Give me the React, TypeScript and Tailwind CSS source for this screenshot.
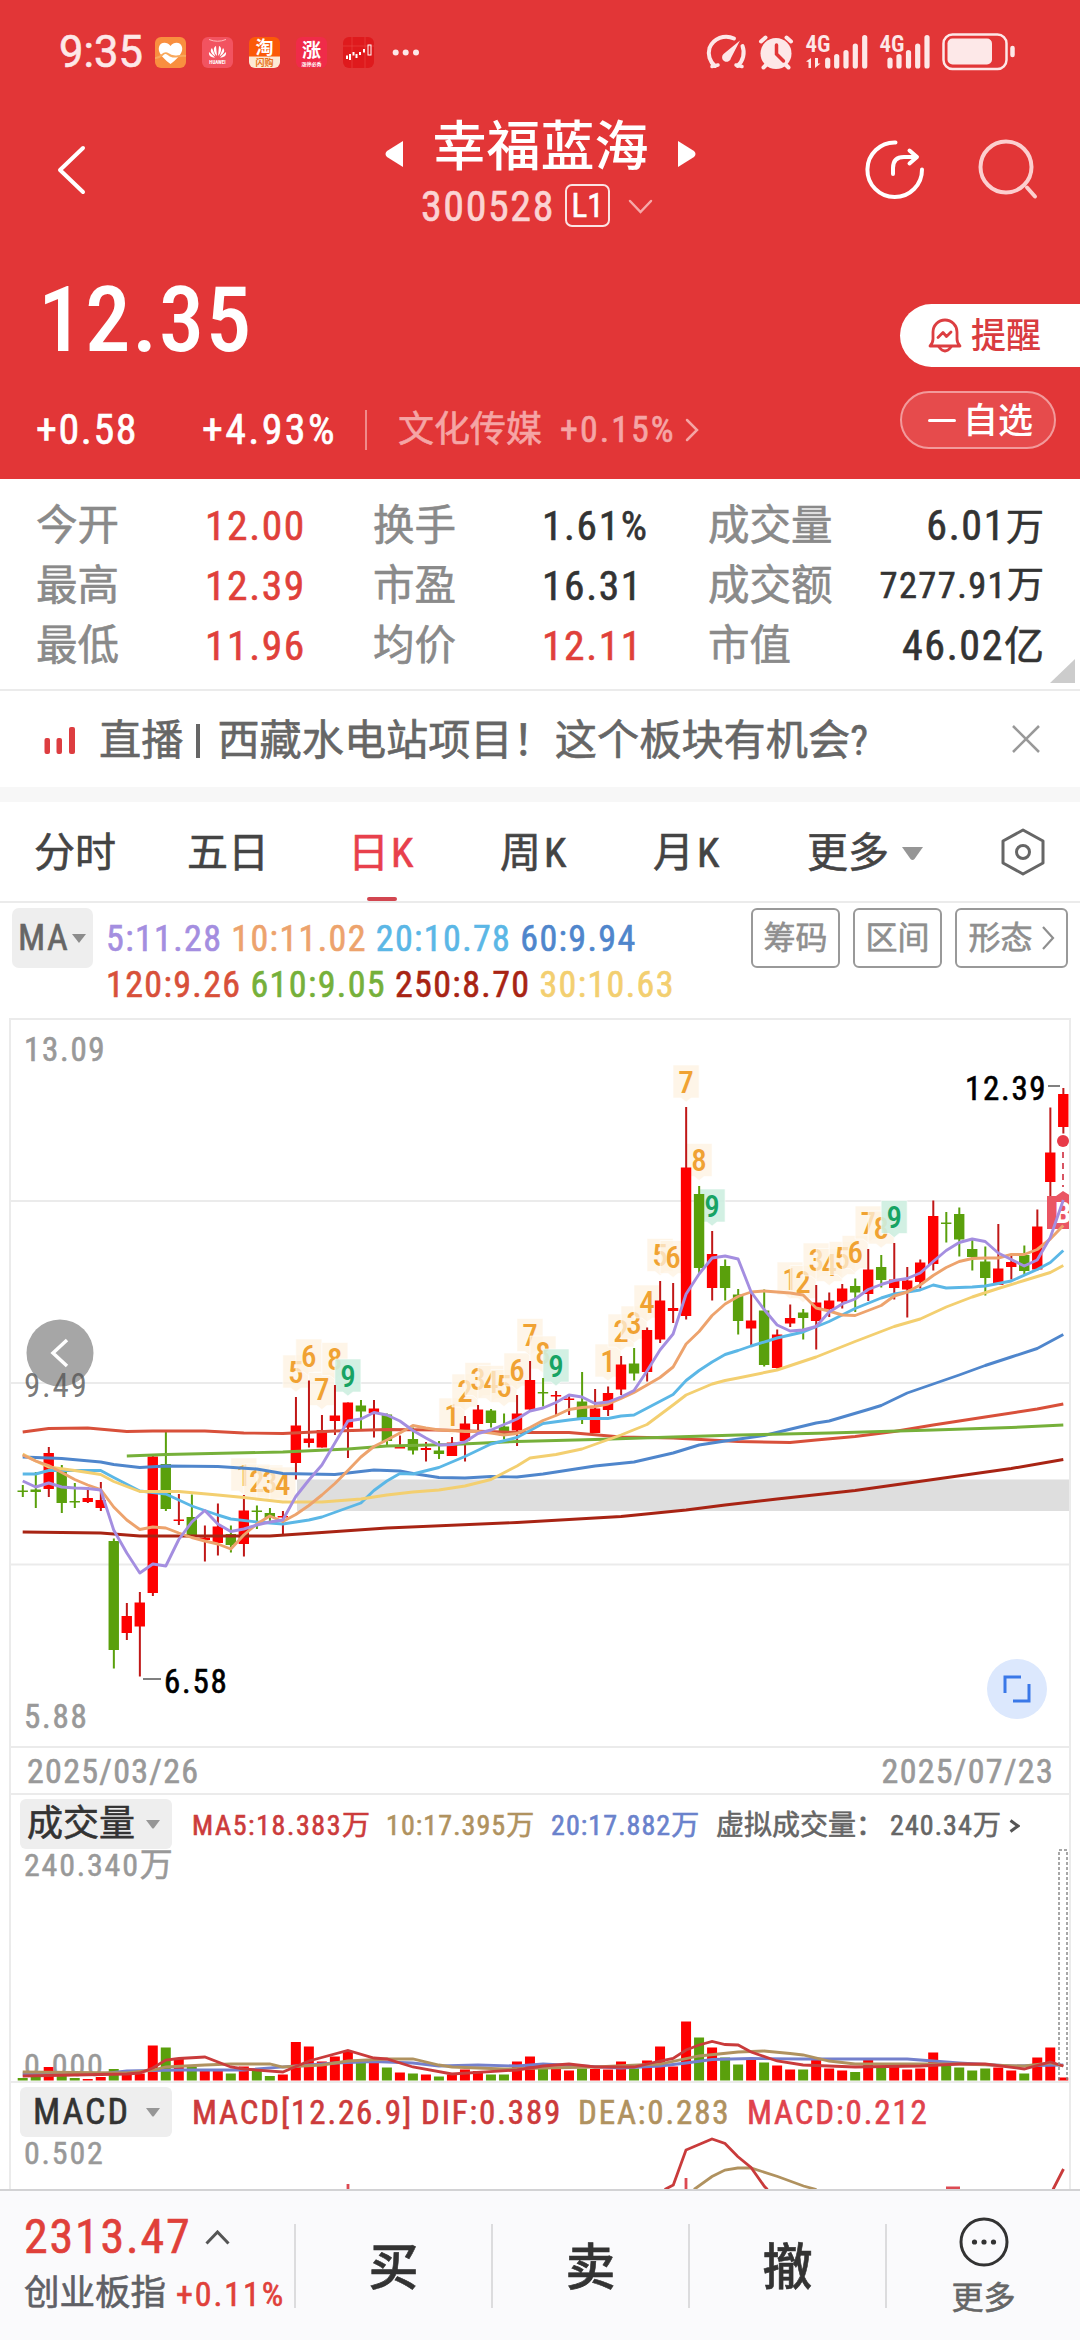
import React from "react";

type Candle = {
  up: 0 | 1;
  top: number;
  bottom: number;
  high: number;
  low: number;
  volume: number;
};

type Point = [number, number];

type Series = {
  color: string;
  points: Point[];
};

const RED = "#fe0000";
const GREEN = "#5aa00c";

// up, body top, body bottom, high, low, volume bar top
const rawCandles: [0 | 1, number, number, number, number, number][] = [
  [0, 1490.5, 1492, 1485, 1497, 2078],
  [0, 1489.5, 1492, 1472, 1508, 2076],
  [1, 1453, 1489, 1447, 1497, 2067],
  [0, 1472, 1503, 1465, 1513, 2076],
  [0, 1501, 1502.5, 1483, 1508, 2078],
  [1, 1498, 1502, 1487, 1503, 2079],
  [1, 1500, 1508, 1482, 1511, 2077],
  [0, 1541, 1650, 1538.5, 1668.5, 2069],
  [1, 1616, 1633, 1603, 1640, 2075],
  [1, 1602.5, 1626.5, 1592, 1676.5, 2073.5],
  [1, 1456.5, 1593, 1455.5, 1596, 2045.5],
  [0, 1464, 1509, 1430.5, 1511, 2047.5],
  [1, 1519.5, 1521, 1494, 1525, 2059],
  [0, 1517, 1535, 1494.5, 1536, 2067],
  [1, 1537.5, 1540, 1525.5, 1561.5, 2071],
  [1, 1526.5, 1543, 1503.5, 1555.5, 2071],
  [0, 1534, 1545, 1525.5, 1552.5, 2073.5],
  [1, 1510.5, 1544, 1495, 1556.5, 2066.5],
  [0, 1510.5, 1511.5, 1505.5, 1529, 2071],
  [0, 1513, 1518, 1508, 1524, 2076],
  [1, 1516, 1517.5, 1511, 1536, 2074.5],
  [1, 1425.5, 1463, 1397, 1479.5, 2042],
  [1, 1438.5, 1443, 1380.5, 1447.5, 2046.5],
  [1, 1430, 1447.5, 1415, 1447.5, 2061.5],
  [1, 1415.5, 1421, 1385, 1435, 2056.5],
  [1, 1402.5, 1427.5, 1402.5, 1458, 2051],
  [0, 1405.5, 1411.5, 1400, 1429.5, 2063],
  [1, 1408.5, 1413, 1400, 1437.5, 2063],
  [0, 1414.5, 1441, 1413.5, 1445, 2067.5],
  [1, 1447, 1448.5, 1435.5, 1447.5, 2072.5],
  [0, 1439, 1450.5, 1427.5, 1454.5, 2073.5],
  [1, 1448, 1450, 1442, 1461.5, 2074.5],
  [0, 1450.5, 1454, 1441, 1459, 2076.5],
  [1, 1442.5, 1456, 1437, 1456, 2074.5],
  [1, 1423.5, 1441, 1416, 1461.5, 2069.5],
  [1, 1409.5, 1424, 1405, 1431, 2071],
  [0, 1410.5, 1423, 1409, 1427.5, 2074.5],
  [0, 1426.5, 1435.5, 1413.5, 1439.5, 2074.5],
  [1, 1413.5, 1430.5, 1395, 1446, 2061.5],
  [1, 1380, 1409.5, 1361, 1410, 2056.5],
  [0, 1392, 1393.5, 1378, 1406.5, 2068.5],
  [1, 1395, 1396.5, 1391, 1415.5, 2069],
  [1, 1398.5, 1400, 1394, 1415, 2070.5],
  [0, 1401.5, 1418, 1372, 1424, 2068.5],
  [1, 1408.5, 1433, 1389, 1433, 2069],
  [1, 1393, 1410, 1386.5, 1416, 2069.5],
  [1, 1364.5, 1389.5, 1356, 1395, 2061.5],
  [0, 1363.5, 1373.5, 1348, 1380.5, 2068.5],
  [1, 1330, 1372, 1327.5, 1381.5, 2060.5],
  [1, 1300.5, 1339.5, 1281, 1343, 2046.5],
  [1, 1308, 1311, 1283, 1323, 2066.5],
  [1, 1167.5, 1316, 1107, 1319.5, 2021.5],
  [0, 1194, 1268, 1186, 1273.5, 2037.5],
  [1, 1254, 1288, 1231, 1300.5, 2047.5],
  [0, 1266, 1288, 1259.5, 1300.5, 2057.5],
  [0, 1294.5, 1321, 1289, 1334.5, 2064.5],
  [1, 1320.5, 1328.5, 1293, 1345.5, 2059.5],
  [0, 1310.5, 1365, 1289.5, 1366.5, 2062.5],
  [1, 1334.5, 1368, 1329.5, 1368.5, 2065.5],
  [1, 1318, 1323.5, 1304.5, 1327, 2069.5],
  [0, 1312.5, 1318, 1309, 1339.5, 2069.5],
  [1, 1302.5, 1321, 1285, 1349.5, 2060],
  [1, 1300.5, 1309, 1292.5, 1317, 2068.5],
  [1, 1288.5, 1301.5, 1284, 1308.5, 2070.5],
  [0, 1286, 1292.5, 1278.5, 1312, 2072],
  [1, 1269.5, 1294, 1249, 1301, 2060],
  [0, 1267, 1280, 1255, 1287.5, 2066.5],
  [1, 1279.5, 1288, 1243, 1299.5, 2066.5],
  [1, 1280.5, 1289.5, 1267, 1317.5, 2069.5],
  [1, 1262.5, 1282, 1259.5, 1288.5, 2068.5],
  [1, 1216, 1264, 1200.5, 1270.5, 2052.5],
  [0, 1222.5, 1224, 1212, 1242.5, 2066],
  [0, 1214, 1239.5, 1207.5, 1256.5, 2067.5],
  [0, 1249, 1257, 1239, 1270.5, 2070.5],
  [0, 1261.5, 1278, 1246.5, 1295.5, 2068.5],
  [1, 1268.5, 1285, 1224, 1285, 2067.5],
  [1, 1262, 1267, 1255.5, 1279.5, 2070.5],
  [0, 1255, 1271, 1245.5, 1275.5, 2073.5],
  [1, 1226.5, 1269.5, 1209.5, 1270.5, 2057.5],
  [1, 1152.5, 1182, 1107.5, 1199, 2047.5],
  [1, 1094, 1127, 1088, 1133.5, 2077.5],
];

const candles: Candle[] = rawCandles.map(([up, top, bottom, high, low, volume]) => ({
  up,
  top,
  bottom,
  high,
  low,
  volume,
}));

const ma5 = [
  1481, 1487, 1483, 1487, 1488, 1488.5, 1490, 1530, 1553, 1573, 1564, 1566, 1539.5, 1522, 1510.5,
  1524, 1531.5, 1529, 1525, 1522, 1520, 1496.5, 1480, 1465, 1443, 1421, 1419, 1412.5, 1415, 1421,
  1430.5, 1438, 1445, 1444.5, 1442, 1433.5, 1430, 1424.5, 1419, 1411, 1408, 1402.5, 1395, 1397,
  1403.5, 1402, 1397, 1390.5, 1371, 1350, 1334, 1294, 1274, 1258, 1256, 1259, 1292, 1309.5, 1325,
  1331, 1330, 1326.5, 1312, 1304, 1299, 1289.5, 1284.5, 1280.5, 1278.5, 1273, 1261.5, 1250.5,
  1242.5, 1239, 1241.5, 1253, 1259.5, 1266, 1260, 1237.5, 1200,
];

const ma10 = [
  1455, 1461, 1465.5, 1472.5, 1479.5, 1485, 1489.5, 1507, 1520, 1529.5, 1527, 1528, 1533, 1537.5,
  1541, 1544, 1549, 1535, 1524, 1516, 1521.5, 1514.5, 1505.5, 1495, 1483.5, 1470.5, 1457, 1446.5,
  1440, 1433, 1425.5, 1428, 1430, 1430.5, 1431.5, 1431.5, 1433, 1435, 1433.5, 1427.5, 1420.5,
  1415.5, 1409.5, 1407.5, 1406.5, 1404, 1398.5, 1392.5, 1385, 1377.5, 1367, 1344, 1331.5, 1315.5,
  1304, 1296.5, 1292, 1291, 1292, 1293, 1295, 1308, 1311, 1315, 1315.5, 1310.5, 1305.5, 1296, 1292,
  1285, 1275.5, 1267.5, 1261.5, 1258.5, 1258, 1258, 1254.5, 1254.5, 1249.5, 1239, 1225.5,
];

const priceSeries: Series[] = [
  {
    color: "#d8503a",
    points: [[0, 1432], [2, 1428.5], [5, 1428], [8, 1431.5], [10, 1431], [14, 1431], [17, 1433], [20, 1433.5], [24, 1431], [28, 1429.5], [32, 1430], [38, 1432.5], [42, 1432.5], [46, 1437], [50, 1438], [55, 1441.5], [59, 1442.5], [61, 1440], [64, 1436.5], [67, 1431.5], [70, 1425], [74, 1417], [78, 1409], [80, 1404]],
  },
  {
    color: "#a82414",
    points: [[0, 1532], [6, 1533], [9, 1536], [14, 1536], [19, 1536], [23, 1532.5], [28, 1528], [38, 1522.5], [46, 1516.5], [51, 1510], [54, 1505], [58, 1499], [64, 1490.5], [70, 1479.5], [76, 1468.5], [80, 1459.5]],
  },
  {
    color: "#4f86cc",
    points: [[0, 1457], [3, 1458.5], [6, 1462], [7, 1464.5], [9, 1467.5], [11, 1466], [15, 1466.5], [18, 1469], [20, 1473.5], [24, 1474.5], [27, 1470], [29, 1471], [30, 1473.5], [32, 1477.5], [34, 1478], [36, 1476.5], [38, 1477], [40, 1474], [44, 1466], [47, 1462], [50, 1453], [52, 1445], [54, 1441], [57, 1435.5], [61, 1423], [62, 1421], [65, 1409.5], [66, 1405.5], [68, 1393], [70, 1384], [72, 1375], [74, 1365.5], [76, 1357], [78, 1348.5], [80, 1334.5]],
  },
  {
    color: "#76b03a",
    points: [[8, 1456], [11, 1454.5], [20, 1452], [25, 1449], [28, 1446], [33, 1444.5], [38, 1441.5], [44, 1439.5], [50, 1437], [55, 1435], [62, 1433], [70, 1430], [76, 1427.5], [80, 1425]],
  },
  {
    color: "#5bb7e6",
    points: [[0, 1474], [1, 1474], [2, 1470.5], [6, 1470.5], [7, 1477.5], [9, 1491], [11, 1494], [13, 1506], [15, 1515], [16, 1519], [18, 1522], [20, 1524], [22, 1520], [23, 1517], [26, 1503], [27, 1490.5], [28, 1481], [29, 1473.5], [30, 1474], [32, 1467.5], [34, 1456.5], [36, 1444], [38, 1437.5], [40, 1423.5], [42, 1420], [43, 1418.5], [45, 1418.5], [46, 1416], [47, 1415], [50, 1394.5], [51, 1380.5], [52, 1370.5], [53, 1362], [54, 1354.5], [55, 1350.5], [56, 1346], [58, 1338], [60, 1332], [62, 1321.5], [64, 1308.5], [66, 1298], [67, 1294], [69, 1290], [70, 1285], [71, 1288], [73, 1287], [74, 1286], [76, 1281], [78, 1269.5], [79, 1262.5], [80, 1250.5]],
  },
  {
    color: "#f3cf70",
    points: [[0, 1454], [1, 1461], [2, 1467], [4, 1470.5], [6, 1474.5], [7, 1481.5], [9, 1491.5], [12, 1491.5], [15, 1495], [17, 1497.5], [20, 1502], [23, 1502], [26, 1499], [28, 1495], [30, 1492], [32, 1490], [34, 1486], [36, 1479.5], [38, 1466], [39, 1458], [41, 1454.5], [43, 1449], [46, 1435], [48, 1424.5], [50, 1405], [51, 1395], [53, 1384], [54, 1380.5], [55, 1378], [58, 1370], [61, 1357], [64, 1341.5], [67, 1326.5], [69, 1319], [71, 1307], [73, 1297], [75, 1288.5], [77, 1280.5], [79, 1272.5], [80, 1265.5]],
  },
  { color: "#eda36d", points: ma10.map((y, i): Point => [i, y]) },
  { color: "#a48ee0", points: ma5.map((y, i): Point => [i, y]) },
];

const volumeSeries: Series[] = [
  {
    color: "#7480cc",
    points: [[0, 2074], [6, 2074], [8, 2071], [12, 2070], [17, 2070], [24, 2063], [27, 2061.5], [30, 2063], [32, 2066], [35, 2065], [38, 2066], [40, 2064], [46, 2068], [49, 2066], [51, 2063], [53, 2059.5], [56, 2058.5], [60, 2059], [68, 2059], [72, 2063], [76, 2066], [80, 2065]],
  },
  {
    color: "#b0925f",
    points: [[0, 2072], [8, 2073], [10, 2070], [11, 2067], [14, 2065], [16, 2064], [19, 2064], [20, 2067], [23, 2065], [25, 2061], [28, 2059], [30, 2059], [32, 2065], [33, 2067], [37, 2069], [40, 2068], [44, 2067], [49, 2064], [52, 2056], [55, 2052], [57, 2051], [59, 2053.5], [60, 2055], [62, 2061], [64, 2064], [72, 2064], [77, 2066], [79, 2063], [80, 2066]],
  },
  {
    color: "#c93b3b",
    points: [[0, 2076], [8, 2074], [9, 2073], [10, 2068], [11, 2060], [12, 2058.5], [14, 2057], [16, 2067], [17, 2069], [20, 2072], [22, 2061], [25, 2050.5], [27, 2058], [28, 2059], [30, 2067], [33, 2074], [38, 2070], [40, 2066], [42, 2064], [44, 2067], [47, 2067], [49, 2061], [50, 2058.5], [51, 2050], [52, 2045], [53, 2041.5], [54, 2044.5], [55, 2045], [56, 2052], [58, 2061], [60, 2065], [64, 2067], [69, 2066], [72, 2064], [74, 2064], [77, 2069], [79, 2062], [80, 2066]],
  },
];

// candle index, count, top of the tag
const tags: [number, number, number][] = [
  [17, 1, 1458], [18, 2, 1464], [19, 3, 1465], [20, 4, 1467],
  [21, 5, 1355], [22, 6, 1339], [23, 7, 1372.5], [24, 8, 1342.5], [25, 9, 1359],
  [33, 1, 1398], [34, 2, 1374], [35, 3, 1362.5], [36, 4, 1365.5], [37, 5, 1369.5], [38, 6, 1353], [39, 7, 1318.5], [40, 8, 1336], [41, 9, 1349],
  [45, 1, 1344], [46, 2, 1314], [47, 3, 1306], [48, 4, 1285], [49, 5, 1238.5], [50, 6, 1240.5], [51, 7, 1065], [52, 8, 1143.5], [53, 9, 1189],
  [59, 1, 1262], [60, 2, 1265.5], [61, 3, 1243], [62, 4, 1248.5], [63, 5, 1241.5], [64, 6, 1235.5], [65, 7, 1206], [66, 8, 1211], [67, 9, 1200.5],
];

const xAt = (i: number) => 22.7 + i * 13.007;

const toPoints = (points: Point[]) => points.map(([i, y]) => `${xAt(i).toFixed(1)},${y}`).join(" ");

const Num: React.FC<{ className?: string; children: React.ReactNode }> = ({ className = "", children }) => (
  <span className={`tracking-[0.038em] ${className}`}>{children}</span>
);

const WideNum: React.FC<{ className?: string; children: React.ReactNode }> = ({ className = "", children }) => (
  <span className={`tracking-[0.056em] ${className}`}>{children}</span>
);

const StatusIcons: React.FC = () => (
  <svg className="h-[46px] w-[320px]" viewBox="700 30 320 46" fill="none" stroke="#fde8e8" strokeLinecap="round">
    <path d="M715 66 A17 17 0 0 1 709.500 48 A18 18 0 0 1 734 38.500" strokeWidth="4" />
    <path d="M742.500 46 A18 18 0 0 1 737.500 66" strokeWidth="4" />
    <path d="M712 66.500 L718 65 M742 66.500 L736 65" strokeWidth="3.500" />
    <path d="M740 40.500 L731 58 A4.500 4.500 0 1 1 723.500 54 Z" fill="#fde8e8" stroke="none" />
    <circle cx="776" cy="53.500" r="15.500" fill="#fde8e8" stroke="none" />
    <path d="M761 41.500 L765.500 37.500 M791 41.500 L786.500 37.500 M767 64 L763.500 67.500 M785 64 L788.500 67.500" strokeWidth="4" />
    <path d="M776.500 45 V54 L783.500 61" stroke="#e23637" strokeWidth="3.500" />
    <text x="805.500" y="51.500" fontSize="23" fontWeight="600" fill="#fde8e8" stroke="none">4G</text>
    <path d="M806 61.500 L811 58 V68 H808.500 V62 Z M815 58 V68 L820.500 63.500 H818 V58 Z" fill="#fde8e8" stroke="none" />
    <path d="M827.700 60 V66 M836.700 56.500 V66 M846 52.500 V66 M855.300 46 V66 M864.700 37.500 V66" strokeWidth="5.200" />
    <text x="879.500" y="51.500" fontSize="23" fontWeight="600" fill="#fde8e8" stroke="none">4G</text>
    <path d="M890 60 V66 M899 56.500 V66 M908.500 52.500 V66 M917.700 46 V66 M927 37.500 V66" strokeWidth="5.200" />
    <rect x="943.500" y="34.500" width="63" height="34.500" rx="9" strokeWidth="2.500" />
    <rect x="947.500" y="38.500" width="44.500" height="26" rx="5" fill="#fde8e8" stroke="none" />
    <path d="M1012.500 48 V55" strokeWidth="4.500" />
  </svg>
);

const AppIcons: React.FC = () => (
  <svg className="h-[32px] w-[270px]" viewBox="155 37 270 32">
    <defs>
      <linearGradient id="tao" x1="0" y1="0" x2="0" y2="1">
        <stop offset="0.600" stopColor="#fb5a08" />
        <stop offset="0.660" stopColor="#fde9d4" />
      </linearGradient>
    </defs>
    <rect x="155" y="37" width="31" height="31" rx="6" fill="#f98f3f" />
    <path d="M170.500 64 C160 56 158 51 159 47 C160 42 167 41 170.500 46 C174 41 181 42 182 47 C183 51 181 56 170.500 64 Z" fill="#fff" />
    <path d="M155 58 C162 59 163 50 168 54 C173 59 178 55 186 56" fill="none" stroke="#f9a95c" strokeWidth="2" />
    <rect x="202" y="37" width="31" height="31" rx="6" fill="#f25360" />
    <path d="M209 39.500 Q217.500 43 226 39.500" fill="none" stroke="#fbb" strokeWidth="1" />
    <path
      d="M217 56 C213 52 213 47 216 46 Z M218 56 C222 52 222 47 219 46 Z M215.500 56.500 C210 53 210 50 212 48 Z M219.500 56.500 C225 53 225 50 223 48 Z M215 57.500 C210 57.500 208.500 55 209 52 Z M220 57.500 C225 57.500 226.500 55 226 52 Z"
      fill="#fff"
    />
    <text x="217.500" y="63.500" fontSize="5" fontWeight="700" fill="#fff" textAnchor="middle">HUAWEI</text>
    <rect x="249" y="37" width="31" height="31" rx="6" fill="url(#tao)" />
    <text x="264.500" y="54" fontSize="18" fontWeight="700" fill="#fff" textAnchor="middle">淘</text>
    <text x="264.500" y="66" fontSize="9" fontWeight="700" fill="#e8741c" textAnchor="middle">闪购</text>
    <rect x="296" y="37" width="31" height="31" rx="6" fill="#f02b49" />
    <text x="311.500" y="57" fontSize="19" fontWeight="700" fill="#fff" textAnchor="middle">涨</text>
    <text x="311.500" y="65.500" fontSize="5" fontWeight="700" fill="#fff" textAnchor="middle">涨停必秀</text>
    <rect x="343" y="37" width="31" height="31" rx="6" fill="#df1a1d" />
    <path d="M343 46 H374 M352 37 V68 M365 37 V68" stroke="#e8443f" strokeWidth="0.700" />
    <path
      d="M347 55.500 V59 M350 54 V60 M353.500 52 V55.500 M356.500 54 V58 M360 52 V55 M364 49 V52.500"
      stroke="#fff"
      strokeWidth="2"
    />
    <rect x="368" y="45" width="3" height="10" fill="none" stroke="#fff" strokeWidth="1" />
    <circle cx="395.700" cy="52.500" r="3" fill="#fde8e8" />
    <circle cx="405.700" cy="52.500" r="3" fill="#fde8e8" />
    <circle cx="416" cy="52.500" r="3" fill="#fde8e8" />
  </svg>
);

const Header: React.FC = () => (
  <header className="flex h-[479px] flex-col bg-[#e23637] text-white">
    <div className="flex h-[106px] items-center pl-[59px]">
      <div className="w-[96px] text-[43.500px] leading-none font-stretch-normal text-[#fde8e8]">9:35</div>
      <AppIcons />
      <div className="ml-[275px]">
        <StatusIcons />
      </div>
    </div>

    <div className="grid h-[128px] grid-cols-[385px_311px_384px]">
      <div className="flex items-center pl-[56px]">
        <svg className="h-[50px] w-[30px]" viewBox="0 0 30 50" fill="none" stroke="#fff" strokeWidth="4" strokeLinecap="round" strokeLinejoin="round">
          <path d="M27 3 L4 25 L27 47" />
        </svg>
      </div>
      <div className="flex flex-col pt-[12px]">
        <div className="flex h-[60px] items-center justify-between">
          <svg className="mt-[11px] h-[26px] w-[18px]" viewBox="0 0 18 26" fill="#fff">
            <path d="M18 0 V26 L2 16 Q-1 13 2 10 Z" />
          </svg>
          <h1 className="text-[54px] leading-[60px] font-medium [-webkit-text-stroke:0px]">幸福蓝海</h1>
          <svg className="mt-[11px] h-[26px] w-[18px]" viewBox="0 0 18 26" fill="#fff">
            <path d="M0 0 V26 L16 16 Q19 13 16 10 Z" />
          </svg>
        </div>
        <div className="flex h-[56px] items-center pt-[2px] pl-[36px]">
          <Num className="w-[144px] text-[42px] leading-none text-[#fbd3d3]">300528</Num>
          <div className="flex h-[43px] w-[45px] -translate-y-[2px] items-center justify-center rounded-[7px] border-2 border-[#fbe4e4] text-[33px] leading-none">
            L1
          </div>
          <svg className="ml-[18px] h-[16px] w-[25px]" viewBox="0 0 25 16" fill="none" stroke="#f6a9a9" strokeWidth="2.500" strokeLinecap="round">
            <path d="M2 2 L12.500 13 L23 2" />
          </svg>
        </div>
      </div>
      <div className="flex items-center gap-[51px] pl-[168px]">
        <svg className="h-[64px] w-[62px]" viewBox="863 138 62 64" fill="none" stroke="#fff" strokeWidth="4" strokeLinecap="round" strokeLinejoin="round">
          <path d="M894.500 142.500 A27.300 27.300 0 1 0 921 169.500" />
          <path d="M892 174 V168 Q892 157 903 157 H915 M908.500 150.500 L916 157 L908.500 163.500" />
        </svg>
        <svg className="h-[64px] w-[62px]" viewBox="976 138 62 64" fill="none" stroke="#fccfcf" strokeWidth="4" strokeLinecap="round">
          <circle cx="1005" cy="167" r="25.500" />
          <path d="M1026 187.500 L1034 196.500" />
        </svg>
      </div>
    </div>

    <div className="flex flex-1 justify-between">
      <div className="pt-[53px] pl-[36px]">
        <div className="pl-[2px] text-[91px] leading-[66px] font-medium tracking-[1.500px] [-webkit-text-stroke:0px]">12.35</div>
        <div className="mt-[56px] flex h-[42px] items-center text-[42px] leading-none">
          <Num className="w-[166px]">+0.58</Num>
          <WideNum className="w-[163px]">+4.93%</WideNum>
          <div className="h-[40px] w-[2px] bg-[#f08a8a]" />
          <div className="ml-[31px] w-[162px] text-[36px] text-[#f5a5a5]">文化传媒</div>
          <WideNum className="w-[124px] text-[36px] text-[#f5a5a5]">+0.15%</WideNum>
          <svg className="h-[24px] w-[16px]" viewBox="0 0 16 24" fill="none" stroke="#f5a5a5" strokeWidth="2.500" strokeLinecap="round">
            <path d="M3 2 L13 12 L3 22" />
          </svg>
        </div>
      </div>
      <div className="flex w-[180px] flex-col gap-[24px] pt-[70px]">
        <button className="flex h-[63px] w-full items-center rounded-l-full bg-white pl-[28px] text-[#d93c3f]">
          <svg className="mr-[9px] h-[36px] w-[34px]" viewBox="0 0 34 36" fill="none" stroke="#dc3e41" strokeWidth="2.800" strokeLinecap="round" strokeLinejoin="round">
            <path d="M5 21 V14 A12 12 0 0 1 29 14 V21 Q29 25 32 28 H2 Q5 25 5 21 Z" />
            <path d="M10 19.500 L15 14.500 L18.500 18.500 L23 14" />
            <path d="M11 29 Q17 37 23 29" />
          </svg>
          <span className="translate-y-px text-[35px] leading-none font-medium [-webkit-text-stroke:0px]">提醒</span>
        </button>
        <button className="flex h-[58px] w-[156px] items-center rounded-full border-2 border-[#f29a9b] bg-[#e64b4c] pl-[26px] text-white">
          <span className="mr-[7px] h-[3px] w-[28px] rounded-full bg-white" />
          <span className="translate-y-px text-[35px] leading-none font-medium [-webkit-text-stroke:0px]">自选</span>
        </button>
      </div>
    </div>
  </header>
);

type StatRow = {
  name: string;
  value: string;
  color: string;
}[];

const statRows: StatRow[] = [
  [
    { name: "今开", value: "12.00", color: "text-[#e0403a]" },
    { name: "换手", value: "1.61%", color: "text-[#333333]" },
  ],
  [
    { name: "最高", value: "12.39", color: "text-[#e0403a]" },
    { name: "市盈", value: "16.31", color: "text-[#333333]" },
  ],
  [
    { name: "最低", value: "11.96", color: "text-[#e0403a]" },
    { name: "均价", value: "12.11", color: "text-[#e0403a]" },
  ],
];

const totals = [
  { name: "成交量", value: "6.01", unit: "万", size: "text-[42px]", unitSize: "text-[38px]" },
  { name: "成交额", value: "7277.91", unit: "万", size: "text-[36.500px]", unitSize: "text-[37px]" },
  { name: "市值", value: "46.02", unit: "亿", size: "text-[42px]", unitSize: "text-[40px]" },
];

const Stats: React.FC = () => (
  <section className="relative h-[212px] border-b-2 border-[#ebebeb] pt-[17px] pr-[36px] pl-[36px]">
    {statRows.map((row, i) => (
      <div key={totals[i].name} className="grid h-[60px] grid-cols-[169px_168px_169px_166px_auto_1fr] items-center text-[41.500px] leading-none">
        {row.map((stat) => (
          <React.Fragment key={stat.name}>
            <span className="text-[#8a8a8a]">{stat.name}</span>
            <Num className={stat.color}>{stat.value}</Num>
          </React.Fragment>
        ))}
        <span className="text-[#8a8a8a]">{totals[i].name}</span>
        <span className={`text-right text-[#333333] ${totals[i].size}`}>
          <Num>{totals[i].value}</Num>
          <span className={totals[i].unitSize}>{totals[i].unit}</span>
        </span>
      </div>
    ))}
    <svg className="absolute right-[5px] bottom-[6px] h-[24px] w-[25px]" viewBox="0 0 25 24" fill="#cccccc">
      <path d="M25 0 V24 H0 Z" />
    </svg>
  </section>
);

const LiveBanner: React.FC = () => (
  <section className="flex h-[96px] items-center pr-[40px] pl-[44px]">
    <svg className="mt-[2px] h-[27px] w-[32px]" viewBox="0 0 32 27" fill="#dd3d40">
      <rect x="0.500" y="11" width="5.500" height="16" rx="2" />
      <rect x="12.500" y="11" width="5.500" height="16" rx="2" />
      <rect x="25" y="0" width="6" height="27" rx="2" />
    </svg>
    <div className="ml-[23px] flex translate-y-[2px] items-center text-[42.200px] leading-none text-[#666666]">
      直播
      <span className="mr-[17px] ml-[13px] h-[34px] w-[4px] bg-[#666666]" />
      西藏水电站项目！这个板块有机会?
    </div>
    <svg className="ml-auto h-[28px] w-[28px]" viewBox="0 0 28 28" stroke="#999999" strokeWidth="2.500">
      <path d="M1 1 L27 27 M27 1 L1 27" />
    </svg>
  </section>
);

const Tabs: React.FC = () => (
  <nav className="grid h-[101px] grid-cols-[153px_161px_152px_153px_154px_194px_auto] items-center border-b-2 border-[#ebebeb] pt-[3px] pl-[34px] text-[41px] leading-none text-[#444444]">
    <span>分时</span>
    <span>五日</span>
    <span className="relative flex h-full items-center text-[#e8404c]">
      日<span className="ml-[2px]">K</span>
      <span className="absolute bottom-0 left-[19px] h-[4px] w-[30px] rounded-full bg-[#d24650]" />
    </span>
    <span>周<span className="ml-[3px]">K</span></span>
    <span>月<span className="ml-[3px]">K</span></span>
    <span className="flex items-center">
      更多
      <svg className="ml-[13px] h-[13px] w-[21px]" viewBox="0 0 21 13" fill="#969696">
        <path d="M0 0 H21 L12.500 12 Q10.500 14 8.500 12 Z" />
      </svg>
    </span>
    <svg className="mb-[2px] h-[48px] w-[44px]" viewBox="0 0 44 48" fill="none" stroke="#666666" strokeWidth="3">
      <path d="M22 2 L42 13 V35 L22 46 L2 35 V13 Z" strokeLinejoin="round" />
      <circle cx="22" cy="24" r="6.500" />
    </svg>
  </nav>
);

const maRows = [
  [
    { text: "5:11.28", color: "text-[#a48ee0]" },
    { text: "10:11.02", color: "text-[#eda36d]" },
    { text: "20:10.78", color: "text-[#5bb7e6]" },
    { text: "60:9.94", color: "text-[#4f86cc]" },
  ],
  [
    { text: "120:9.26", color: "text-[#d8503a]" },
    { text: "610:9.05", color: "text-[#76b03a]" },
    { text: "250:8.70", color: "text-[#a82414]" },
    { text: "30:10.63", color: "text-[#f3cf70]" },
  ],
];

const chartButton = "flex h-[60px] items-center justify-center rounded-[6px] border-2 border-[#999999]";

const MaLegend: React.FC = () => (
  <section className="flex h-[115px] items-start pt-[5px] pr-[12px] pl-[12px]">
    <div className="flex h-[60px] w-[81px] items-center rounded-[7px] bg-[#eeeeee] pl-[6px] text-[36px] leading-none text-[#666666]">
      <Num>MA</Num>
      <svg className="ml-auto mr-[7px] h-[9px] w-[14px]" viewBox="0 0 14 9" fill="#8c8c8c">
        <path d="M0 0 H14 L7 9 Z" />
      </svg>
    </div>
    <div className="ml-[13px] flex-1 text-[36px] leading-[46px]">
      {maRows.map((row) => (
        <div key={row[0].text} className="flex translate-y-[8px] gap-[9px]">
          {row.map((item) => (
            <Num key={item.text} className={item.color}>{item.text}</Num>
          ))}
        </div>
      ))}
    </div>
    <div className="flex gap-[13px] text-[32px] leading-none text-[#8f8f8f]">
      <button className={`${chartButton} w-[89px]`}>筹码</button>
      <button className={`${chartButton} w-[89px]`}>区间</button>
      <button className={`${chartButton} w-[113px]`}>
        形态
        <svg className="ml-[8px] h-[24px] w-[14px]" viewBox="0 0 14 24" fill="none" stroke="#8f8f8f" strokeWidth="2.200">
          <path d="M2 1 L12 12 L2 23" />
        </svg>
      </button>
    </div>
  </section>
);

const PriceChart: React.FC = () => (
  <svg className="-mx-[11px] block h-[728px] w-[1080px] max-w-none" viewBox="0 1018 1080 728">
    <path d="M9 1019 H1071 M9 1201 H1071 M9 1383 H1071 M9 1564.500 H1071" stroke="#ebebeb" strokeWidth="2" />
    <rect x="297" y="1479.500" width="774" height="31.500" fill="#dedede" />

    <g fontSize="33" fill="#999999" stroke="#999999" strokeWidth="0.600" letterSpacing="1.700">
      <text x="24" y="1060.500">13.09</text>
      <text x="24" y="1728">5.88</text>
    </g>
    <circle cx="60" cy="1353" r="33.500" fill="#a6a6a6" />
    <path d="M67 1340 L53 1353 L67 1366" fill="none" stroke="#fff" strokeWidth="3.500" />
    <text x="24" y="1397" fontSize="33" fill="#555555" fillOpacity="0.800" letterSpacing="1.700">9.49</text>

    {tags.map(([i, count, top]) => {
      const x = xAt(i);
      const last = count === 9;
      return (
        <g key={i}>
          <path
            d={`M${x - 13} ${top} H${x + 13} V${top + 33} H${x + 5} L${x} ${top + 37} L${x - 5} ${top + 33} H${x - 13} Z`}
            fill={last ? "#cdeee0" : "#fef1e0"}
            fillOpacity={last ? 0.9 : 0.75}
            stroke="#fff"
            strokeOpacity="0.600"
          />
          <text x={x} y={top + 27.5} fontSize="31" fontWeight="500" textAnchor="middle" fill={last ? "#17a364" : "#f0a233"}>
            {count}
          </text>
        </g>
      );
    })}

    {candles.map((c, i) => (
      <g key={i} fill={c.up ? RED : GREEN}>
        <rect x={xAt(i) - 0.9} y={c.high} width="2" height={c.low - c.high} fill={c.up ? "#c01818" : GREEN} />
        <rect x={xAt(i) - 5.2} y={c.top} width="10.400" height={Math.max(c.bottom - c.top, 1.5)} />
      </g>
    ))}

    <circle cx="1063" cy="1141" r="6" fill="#e83a48" />
    <path d="M1063 1152 V1187" stroke="#d85563" strokeWidth="2" strokeDasharray="6 5" />
    <path d="M1047 1196 H1056 L1063 1191 L1071 1196 V1229 H1047 Z" fill="#ea5563" />
    <text x="1055" y="1223" fontSize="29" fontWeight="700" fill="#fff">B</text>

    {priceSeries.map((s) => (
      <polyline key={s.color} points={toPoints(s.points)} fill="none" stroke={s.color} strokeWidth="2.900" strokeLinejoin="round" />
    ))}

    <path d="M143 1679 H161 M1048 1086 H1060" stroke="#808080" strokeWidth="1.800" />
    <g fontSize="33" letterSpacing="1.700" fill="#000" stroke="#000" strokeWidth="0.600">
      <text x="164" y="1693">6.58</text>
      <text x="965" y="1100">12.39</text>
    </g>

    <circle cx="1017" cy="1689" r="30" fill="#dce8fd" />
    <path d="M1005 1693 V1677 H1021 M1029 1684 V1701 H1013" fill="none" stroke="#3a78e8" strokeWidth="3" />
  </svg>
);

const VolumeChart: React.FC = () => (
  <svg className="-mx-[11px] block h-[230px] w-[1080px] max-w-none overflow-visible" viewBox="0 1853 1080 230">
    <path d="M9 2082 H1071" stroke="#ebebeb" strokeWidth="2" />
    {candles.map((c, i) => (
      <rect key={i} x={xAt(i) - 5} y={c.volume} width="10" height={2080.5 - c.volume} fill={c.up ? RED : GREEN} />
    ))}
    <g fontSize="32" fill="#999999" stroke="#999999" strokeWidth="0.500" letterSpacing="1.800">
      <text x="24" y="1876">
        240.340<tspan fontSize="33" letterSpacing="0">万</tspan>
      </text>
      <text x="24" y="2076">0.000</text>
    </g>
    {volumeSeries.map((s) => (
      <polyline key={s.color} points={toPoints(s.points)} fill="none" stroke={s.color} strokeWidth="2.800" />
    ))}
    <path d="M1059 2080 V1850 H1067 V2080" fill="none" stroke="#8a8a8a" strokeWidth="1.500" strokeDasharray="3 2" />
  </svg>
);

const MacdChart: React.FC = () => (
  <svg className="-mx-[11px] block h-[51px] w-[1080px] max-w-none overflow-visible" viewBox="0 2138 1080 51">
    <text x="24" y="2163.500" fontSize="32" letterSpacing="1.800" fill="#999999" stroke="#999999" strokeWidth="0.500">0.502</text>
    <g fill="none" strokeWidth="2.800">
      <path d="M686 2178 V2189 M348 2184 V2189 M946 2188 H960" stroke="#dc4a52" />
      <path d="M694 2189.500 L712 2176.500 L725 2170 L737.700 2168 H751 L777.600 2176.500 L803.500 2186 L816.500 2189.500" stroke="#b0925f" />
      <path d="M664.700 2189.500 L673.300 2185 L686 2150 L699 2144.500 L712 2139 L725 2143.500 L737.700 2156.500 L751 2167.500 L764.500 2186.500 L767.500 2189.500 M1053 2189.500 L1063.500 2169" stroke="#c93b3b" />
    </g>
  </svg>
);

const PanelButton: React.FC<{ label: string; className: string }> = ({ label, className }) => (
  <button className={`flex h-[50px] w-[152px] shrink-0 items-center justify-between rounded-[6px] bg-[#eeeeee] pr-[12px] leading-none text-[#333333] ${className}`}>
    {label}
    <svg className="h-[9px] w-[14px]" viewBox="0 0 14 9" fill="#969696">
      <path d="M0 0 H14 L8 8 Q7 9 6 8 Z" />
    </svg>
  </button>
);

const Charts: React.FC = () => (
  <section className="mx-[9px] h-[1171px] overflow-hidden border-x-2 border-[#ebebeb]">
    <PriceChart />
    <div className="flex h-[49px] items-center justify-between border-y-2 border-[#ebebeb] pr-[15px] pl-[16px] text-[34px] leading-none text-[#999999]">
      <Num>2025/03/26</Num>
      <Num>2025/07/23</Num>
    </div>
    <div className="flex h-[58px] items-center pl-[9px]">
      <PanelButton label="成交量" className="pl-[7px] text-[36px]" />
      <div className="ml-[20px] flex translate-y-[2px] items-center text-[28px] leading-none">
        <span className="w-[194px] text-[#cc3b3b]"><WideNum>MA5:18.383</WideNum>万</span>
        <span className="w-[165px] text-[#b0925f]"><Num>10:17.395</Num>万</span>
        <span className="w-[165px] text-[#6a82cc]"><Num>20:17.882</Num>万</span>
        <span className="w-[174px] text-[#666666]">虚拟成交量：</span>
        <span className="w-[119px] text-[#666666]"><Num>240.34</Num>万</span>
        <svg className="h-[14px] w-[11px]" viewBox="0 0 11 14" fill="none" stroke="#555555" strokeWidth="3">
          <path d="M1.500 1.500 L9 7 L1.500 12.500" />
        </svg>
      </div>
    </div>
    <VolumeChart />
    <div className="flex h-[55px] items-center pt-[3px] pl-[9px]">
      <PanelButton label="MACD" className="pl-[13px] text-[36px] tracking-[0.056em]" />
      <div className="ml-[20px] flex items-center text-[33px] leading-none">
        <WideNum className="w-[229px] text-[#cc3b3b]">MACD[12.26.9]</WideNum>
        <WideNum className="w-[157px] text-[#cc3b3b]">DIF:0.389</WideNum>
        <WideNum className="w-[169px] text-[#b0925f]">DEA:0.283</WideNum>
        <WideNum className="text-[#e0424c]">MACD:0.212</WideNum>
      </div>
    </div>
    <MacdChart />
  </section>
);

const BottomBar: React.FC = () => (
  <footer className="flex h-[151px] border-t-2 border-[#d2d2d4] bg-[#fafafc]">
    <div className="w-[294px] pt-[26px] pl-[24px]">
      <div className="flex h-[40px] items-center text-[48px] leading-none text-[#e0403a]">
        <Num className="w-[181px]">2313.47</Num>
        <svg className="h-[15px] w-[25px]" viewBox="0 0 25 15" fill="none" stroke="#555555" strokeWidth="3">
          <path d="M1.500 13.500 L12.500 2 L23.500 13.500" />
        </svg>
      </div>
      <div className="mt-[15px] flex h-[44px] items-center text-[35.500px] leading-none">
        <span className="w-[152px] text-[#5f6066]">创业板指</span>
        <WideNum className="text-[34px] text-[#e0403a]">+0.11%</WideNum>
      </div>
    </div>
    {["买", "卖", "撤"].map((action) => (
      <div key={action} className="flex w-[197px] items-center">
        <div className="h-[84px] w-[2px] bg-[#dcdcde]" />
        <span className="flex-1 translate-y-[2px] text-center text-[50px] leading-none font-medium text-[#333333]">{action}</span>
      </div>
    ))}
    <div className="flex flex-1 items-center">
      <div className="h-[84px] w-[2px] bg-[#dcdcde]" />
      <div className="flex flex-1 flex-col items-center">
        <svg className="h-[50px] w-[50px]" viewBox="0 0 50 50">
          <circle cx="25" cy="25" r="23" fill="none" stroke="#333333" strokeWidth="3" />
          <circle cx="15.500" cy="25" r="2.600" fill="#333333" />
          <circle cx="25" cy="25" r="2.600" fill="#333333" />
          <circle cx="34.500" cy="25" r="2.600" fill="#333333" />
        </svg>
        <span className="mt-[15px] text-[32px] leading-none text-[#666666]">更多</span>
      </div>
    </div>
  </footer>
);

export default function App() {
  return (
    <div className="h-[2340px] w-[1080px] overflow-hidden bg-white font-['Roboto','Noto_Sans_CJK_SC',sans-serif] font-normal font-stretch-condensed [-webkit-text-stroke:0.6px]">
      <Header />
      <Stats />
      <LiveBanner />
      <div className="h-[15px] bg-[#f7f7f7]" />
      <Tabs />
      <MaLegend />
      <Charts />
      <BottomBar />
    </div>
  );
}
